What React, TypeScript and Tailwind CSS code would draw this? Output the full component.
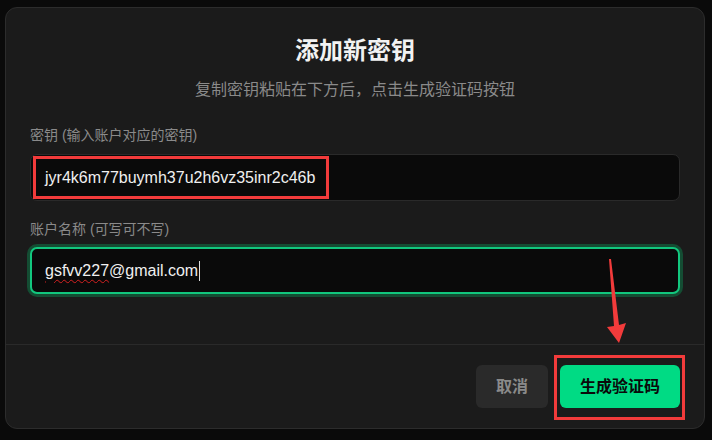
import React from "react";

const latin = { fontFamily: '"Liberation Sans", "Noto Sans CJK SC", sans-serif' };

export default function App() {
  return (
    <div className="relative w-[712px] h-[440px] bg-[#0a0a0a] pt-[7px] pl-[5px]" style={latin}>
      <div className="w-[700px] h-[422px] bg-[#1b1b1b] border border-[#2c2c2c] rounded-[12px] flex flex-col">
        <div className="flex-1 px-6 pt-[27px]">
          <h1 className="text-center text-[24px] leading-[32px] font-bold text-[#f2f2f2]">添加新密钥</h1>
          <p className="text-center text-[16px] leading-[24px] mt-[11px] text-[#8a8a8a]">复制密钥粘贴在下方后，点击生成验证码按钮</p>

          <label className="block mt-[23px] text-[14px] leading-[20px] text-[#8a8a8a]">密钥 (输入账户对应的密钥)</label>
          <div className="mt-[9px] h-[47px] rounded-[7px] border border-[#2a2a2a] bg-[#0a0a0a] flex items-center px-[14px] text-[16px] text-[#f0f0f0]">
            jyr4k6m77buymh37u2h6vz35inr2c46b
          </div>

          <label className="block mt-[18px] text-[14px] leading-[20px] text-[#8a8a8a]">账户名称 (可写可不写)</label>
          <div className="mt-[8px] h-[47px] rounded-[7px] border-2 border-[#12c77e] ring-[3px] ring-[#144d33] bg-[#0a0a0a] flex items-center px-[13px] text-[16px] text-[#f0f0f0]">
            <span className="underline decoration-wavy decoration-[#d42020] decoration-1 underline-offset-[3px]">gsfvv227</span>
            <span>@gmail.com</span>
            <span className="inline-block w-px h-[20px] bg-[#e0e0e0] ml-px"></span>
          </div>
        </div>

        <div className="border-t border-[#2a2a2a] px-6 pt-5 pb-5 flex justify-end gap-3">
          <button className="w-[72px] h-[43px] rounded-[6px] bg-[#2a2a2a] text-[#8a8a8a] font-bold text-[16px]">取消</button>
          <button className="w-[120px] h-[43px] rounded-[6px] bg-[#00db84] text-[#0a0a0a] font-bold text-[16px]">生成验证码</button>
        </div>
      </div>

      {/* annotations */}
      <div className="absolute left-[33px] top-[156px] w-[296px] h-[43px] border-[3px] border-[#f23b3b] pointer-events-none"></div>
      <div className="absolute left-[554px] top-[355px] w-[131px] h-[65px] border-[3px] border-[#f23b3b] pointer-events-none"></div>
      <svg className="absolute left-0 top-0 pointer-events-none" width="712" height="440">
        <polygon points="609,259 611,259 619,325 626,323 619,343 607,327 614,326" fill="#f23b3b" />
      </svg>
    </div>
  );
}
